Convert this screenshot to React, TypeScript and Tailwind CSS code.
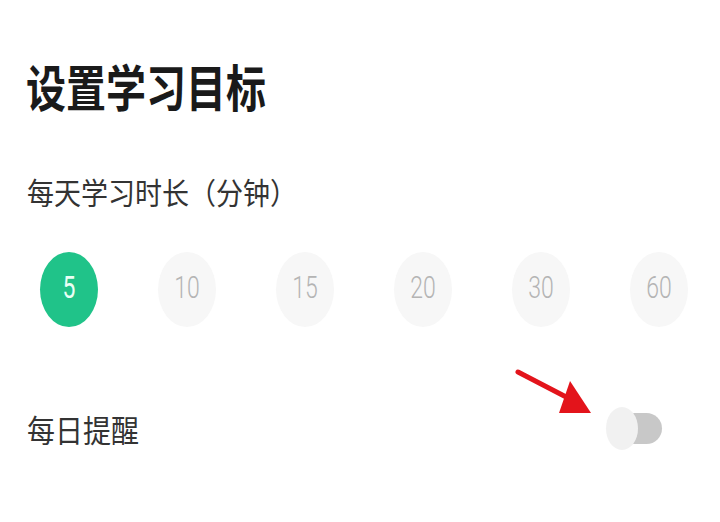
import { useState } from "react";

const minutes = [5, 10, 15, 20, 30, 60];

const cjk = "font-['Noto_Sans_CJK_SC','Noto_Sans',sans-serif]";

export default function App() {
  const [picked, setPicked] = useState(5);
  const [remind, setRemind] = useState(false);

  return (
    <div className={`relative w-[720px] h-[522px] overflow-hidden bg-white ${cjk}`}>
      {/* Title */}
      <div className="pl-[26px] pt-[56px]">
        <h1 className="text-[40px] leading-[48px] font-bold text-[#1a1a1a] scale-y-[1.25] origin-top">
          设置学习目标
        </h1>
      </div>

      {/* Daily duration */}
      <div className="pl-[27px] pt-[70px]">
        <p className="text-[27px] leading-[32px] text-[#333] scale-y-[1.1] origin-top">
          每天学习时长（分钟）
        </p>
      </div>

      <div className="flex gap-[60px] pl-[40px] pt-[46px]">
        {minutes.map((m) => (
          <button
            key={m}
            onClick={() => setPicked(m)}
            className={`flex h-[75px] w-[58px] items-center justify-center rounded-[50%] ${
              picked === m ? "bg-[#20c389] text-[#eafff5]" : "bg-[#f7f7f7] text-[#b4b4b4]"
            }`}
          >
            <span
              className={`font-['Roboto',sans-serif] text-[23px] scale-y-[1.35] ${
                picked === m ? "font-normal" : "font-light"
              }`}
            >
              {m}
            </span>
          </button>
        ))}
      </div>

      {/* Daily reminder */}
      <div className="flex items-center justify-between pl-[27px] pr-[58px] pt-[80px]">
        <span className="text-[28px] leading-[32px] text-[#333] scale-y-[1.1]">每日提醒</span>
        <button onClick={() => setRemind(!remind)} className="relative h-[43px] w-[56px]">
          <span className="absolute right-0 top-[6px] h-[31px] w-[44px] rounded-full bg-[#c8c8c8]" />
          <span className="absolute left-0 top-0 h-[43px] w-[32px] rounded-[50%] bg-[#f1f1f1]" />
        </button>
      </div>

      {/* Annotation arrow */}
      <svg className="absolute left-0 top-0" width="720" height="522" viewBox="0 0 720 522">
        <line x1="518" y1="372" x2="570" y2="399" stroke="#e3141b" strokeWidth="5" strokeLinecap="round" />
        <polygon points="570,381 591,413 559,413" fill="#e3141b" />
      </svg>
    </div>
  );
}
